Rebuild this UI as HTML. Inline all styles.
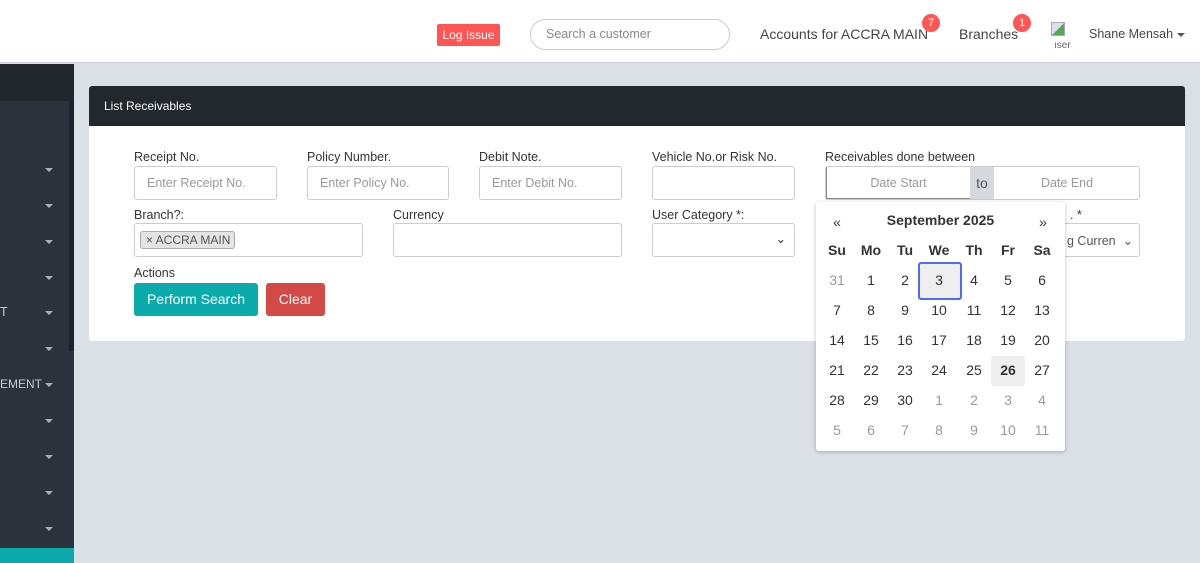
<!DOCTYPE html>
<html><head><meta charset="utf-8"><style>
*{box-sizing:border-box;margin:0;padding:0}
body{width:1200px;height:563px;overflow:hidden;background:#dbe0e7;font-family:"Liberation Sans",sans-serif;position:relative;color:#333}
.abs{position:absolute}
.top{left:0;top:0;width:1200px;height:63px;background:#fff;border-bottom:1px solid #cfd4da}
.side{left:0;top:64px;width:74px;height:499px;background:#2c323b}
.car{position:absolute;left:45px;width:0;height:0;border-left:4px solid transparent;border-right:4px solid transparent;border-top:4px solid #aab0b8}
.lbl{position:absolute;font-size:12.5px;color:#333;white-space:nowrap}
.inp{position:absolute;height:34px;border:1px solid #ccc;border-radius:3px;background:#fff;font-size:12.5px;color:#999;padding:9px 12px;white-space:nowrap;overflow:hidden}
.cal{left:816px;top:202px;width:249px;height:249px;background:#fff;border-radius:3px;box-shadow:0 1px 4px rgba(0,0,0,.25)}
.d{position:absolute;width:34px;height:30px;line-height:30px;text-align:center;font-size:14px;color:#333}
.g{color:#999}
.h{font-weight:bold}
</style></head><body>
<div class="abs top"></div>
<div class="abs" style="left:437px;top:24px;width:63px;height:22px;background:#f55;border-radius:2px;color:#fff;font-size:12px;line-height:22px;text-align:center">Log Issue</div>
<div class="abs" style="left:530px;top:19px;width:200px;height:31px;border:1px solid #ccc;border-radius:16px;font-size:12.5px;color:#888;padding:7px 15px">Search a customer</div>
<div class="abs" style="left:760px;top:26px;font-size:14px;color:#444">Accounts for ACCRA MAIN</div>
<div class="abs" style="left:922px;top:14px;width:18px;height:18px;border-radius:50%;background:#f55;color:#fff;font-size:11px;line-height:18px;text-align:center">7</div>
<div class="abs" style="left:959px;top:26px;font-size:14px;color:#444">Branches</div>
<div class="abs" style="left:1013px;top:14px;width:18px;height:18px;border-radius:50%;background:#f55;color:#fff;font-size:11px;line-height:18px;text-align:center">1</div>
<div class="abs" style="left:1051px;top:22px;width:14px;height:14px;border:1px solid #aaa;background:linear-gradient(135deg,#dde 50%,#5a5 50%)"></div>
<div class="abs" style="left:1054px;top:40px;font-size:10px;color:#666">ıser</div>
<div class="abs" style="left:1089px;top:27px;font-size:12.5px;color:#444">Shane Mensah</div>
<div class="abs" style="left:1177px;top:33px;border-left:4px solid transparent;border-right:4px solid transparent;border-top:4px solid #555"></div>

<div class="abs side">
<div style="position:absolute;left:0;top:0;width:74px;height:37px;background:#22262d"></div>
<div style="position:absolute;left:69px;top:37px;width:5px;height:250px;background:#1f2329"></div>
<div class="car" style="top:104px"></div><div class="car" style="top:140px"></div><div class="car" style="top:176px"></div><div class="car" style="top:212px"></div><div class="car" style="top:247px"></div><div class="car" style="top:283px"></div><div class="car" style="top:319px"></div><div class="car" style="top:355px"></div><div class="car" style="top:391px"></div><div class="car" style="top:427px"></div><div class="car" style="top:463px"></div>
<div style="position:absolute;left:0;top:241px;font-size:12.5px;color:#c7cbd0">T</div>
<div style="position:absolute;left:0;top:313px;font-size:12px;color:#c7cbd0">EMENT</div>
<div style="position:absolute;left:0;top:484px;width:74px;height:15px;background:#0aabaa"></div>
</div>

<div class="abs" style="left:89px;top:86px;width:1096px;height:255px;background:#fff;border-radius:3px"></div>
<div class="abs" style="left:89px;top:86px;width:1096px;height:40px;background:#23272e;border-radius:3px 3px 0 0;color:#fff;font-size:12px;padding:13px 15px">List Receivables</div>

<div class="lbl" style="left:134px;top:150px">Receipt No.</div>
<div class="inp" style="left:134px;top:166px;width:143px">Enter Receipt No.</div>
<div class="lbl" style="left:307px;top:150px">Policy Number.</div>
<div class="inp" style="left:307px;top:166px;width:142px">Enter Policy No.</div>
<div class="lbl" style="left:479px;top:150px">Debit Note.</div>
<div class="inp" style="left:479px;top:166px;width:143px">Enter Debit No.</div>
<div class="lbl" style="left:652px;top:150px">Vehicle No.or Risk No.</div>
<div class="inp" style="left:652px;top:166px;width:143px"></div>
<div class="lbl" style="left:825px;top:150px">Receivables done between</div>
<div class="inp" style="left:825px;top:166px;width:315px;padding:0"></div>
<div class="abs" style="left:826px;top:167px;width:144px;height:32px;border-left:1px solid #888;border-bottom:1px solid #888;text-align:center;font-size:12.5px;color:#999;line-height:32px">Date Start</div>
<div class="abs" style="left:970px;top:167px;width:24px;height:32px;background:#d5d8dc;text-align:center;font-size:14px;color:#555;line-height:32px">to</div>
<div class="abs" style="left:995px;top:167px;width:144px;height:32px;text-align:center;font-size:12.5px;color:#999;line-height:32px">Date End</div>

<div class="lbl" style="left:134px;top:208px">Branch?:</div>
<div class="inp" style="left:134px;top:223px;width:229px;padding:0"></div>
<div class="abs" style="left:140px;top:231px;width:95px;height:18px;background:#e4e4e4;border:1px solid #aaa;border-radius:3px;font-size:12px;color:#555;line-height:16px;padding-left:5px;white-space:nowrap">× ACCRA MAIN</div>
<div class="lbl" style="left:393px;top:208px">Currency</div>
<div class="inp" style="left:393px;top:223px;width:229px"></div>
<div class="lbl" style="left:652px;top:208px">User Category *:</div>
<div class="inp" style="left:652px;top:223px;width:143px;color:#333;text-align:right;padding:7px 8px">&#8964;</div>
<div class="lbl" style="left:1070px;top:208px">. *</div>
<div class="inp" style="left:1040px;top:223px;width:100px;color:#555;padding:9px 6px 0 26px">g Curren&nbsp;&nbsp;⌄</div>

<div class="lbl" style="left:134px;top:266px">Actions</div>
<div class="abs" style="left:134px;top:283px;width:124px;height:33px;background:#0aabaa;border-radius:3px;color:#fff;font-size:14px;line-height:33px;text-align:center">Perform Search</div>
<div class="abs" style="left:266px;top:283px;width:59px;height:33px;background:#d24a45;border-radius:3px;color:#fff;font-size:14px;line-height:33px;text-align:center">Clear</div>

<div class="abs cal">
<div class="d" style="left:4px;top:5px">«</div>
<div style="position:absolute;left:40px;width:169px;top:3px;line-height:30px;text-align:center;font-size:14px;font-weight:bold">September 2025</div>
<div class="d" style="left:210px;top:5px">»</div>
</div>
<div class="abs" style="left:918px;top:262px;width:44px;height:38px;border:2px solid #4a6cf7;border-radius:3px;background:#eee"></div>
<div class="abs" style="left:991px;top:356px;width:34px;height:30px;background:#eee;border-radius:3px"></div>
<div id="days"></div>
<script>
var xs=[837,871,905,939,974,1008,1042],rows=[
["Su","Mo","Tu","We","Th","Fr","Sa"],
["31",1,2,3,4,5,6],[7,8,9,10,11,12,13],[14,15,16,17,18,19,20],[21,22,23,24,25,26,27],[28,29,30,"1","2","3","4"],["5","6","7","8","9","10","11"]];
var h="";rows.forEach(function(r,ri){r.forEach(function(v,ci){var c="d";if(ri==0)c+=" h";if(typeof v=="string"&&ri>0)c+=" g";if(v===26)c+=" h";h+='<div class="abs '+c+'" style="left:'+(xs[ci]-17)+'px;top:'+(235+ri*30)+'px">'+v+'</div>';});});
document.getElementById("days").innerHTML=h;
</script>
</body></html>
